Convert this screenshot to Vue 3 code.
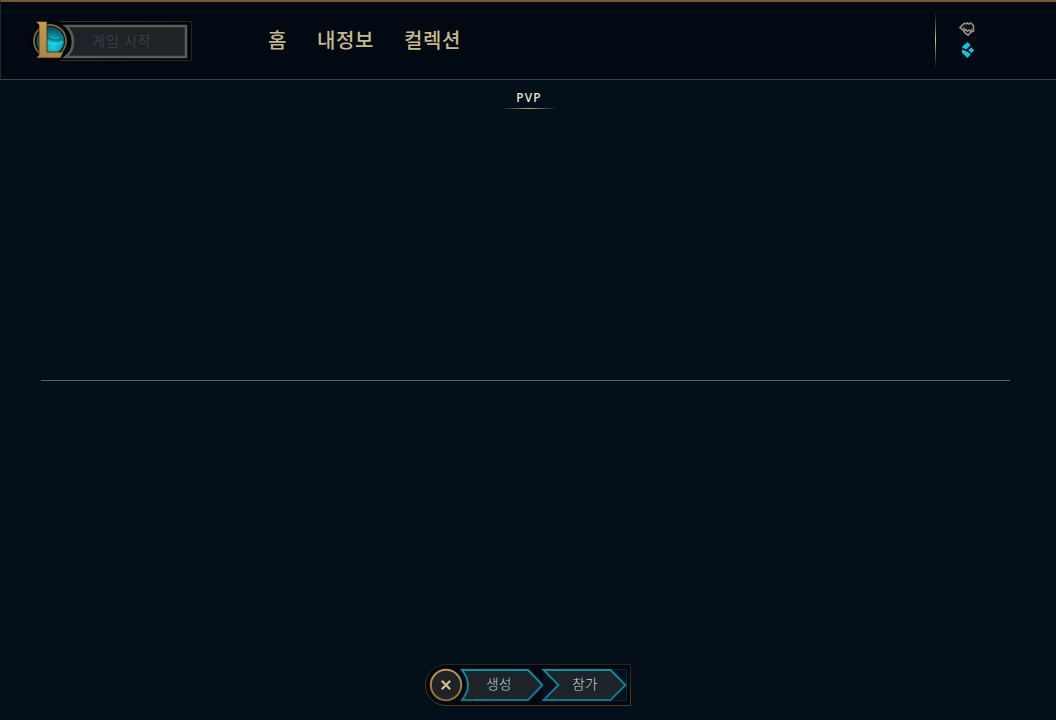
<script setup>
const navItems = [
  { id: 'home', label: '홈' },
  { id: 'profile', label: '내정보' },
  { id: 'collection', label: '컬렉션' },
]
</script>

<template>
  <div class="client">
    <header class="topbar">
      <button class="play" disabled>
        <svg class="art" width="162" height="42" viewBox="0 0 162 42">
          <defs>
            <linearGradient id="gold" x1="0" y1="0" x2="0" y2="1">
              <stop offset="0" stop-color="#c99a4c" />
              <stop offset="1" stop-color="#b08542" />
            </linearGradient>
            <radialGradient id="orb" cx=".6" cy=".72" r=".68">
              <stop offset="0" stop-color="#10d2df" />
              <stop offset=".5" stop-color="#0ba3b6" />
              <stop offset="1" stop-color="#075266" />
            </radialGradient>
            <linearGradient id="rim" x1="0" y1="0" x2="1" y2="0">
              <stop offset="0" stop-color="#43351e" />
              <stop offset="1" stop-color="#2b241a" />
            </linearGradient>
          </defs>
          <path d="M30 1.5H161.5V40.500H30" fill="#01060e" stroke="url(#rim)" />
          <path d="M35.500 6H156V37H35.500Q43 31 43 21.500T35.500 6Z" fill="#1e2328" stroke="#5c5b57" stroke-width="2.500" />
          <circle cx="20" cy="21" r="20.500" fill="#01060e" />
          <path d="M36 6Q43 12 43 21.500T36 37" fill="none" stroke="#5c5b57" stroke-width="2" />
          <circle cx="20" cy="21" r="16" fill="#020d16" stroke="#86652f" stroke-width="1.800" />
          <circle cx="20.500" cy="21" r="13.500" fill="url(#orb)" stroke="#0a6174" />
          <path d="M16 12Q25 10 31 18M16 17Q24 22 32 19" fill="none" stroke="#087386" stroke-width="1.500" />
          <path d="M16 21Q24 27 33 22" fill="none" stroke="#25e1e8" stroke-width="1.300" />
          <path d="M6 1.500H17V32H33.500L30.500 38H6L9 35V5Z" fill="url(#gold)" stroke="#231b12" stroke-width=".7" />
        </svg>
        <span class="play-label">게임 시작</span>
      </button>
      <nav class="nav">
        <a v-for="item in navItems" :key="item.id">{{ item.label }}</a>
      </nav>
      <div class="wallet">
        <i class="divider"></i>
        <div class="currencies">
          <svg width="16" height="16" viewBox="0 0 16 16">
            <path d="M1 6.500L5.500 2.200L7 3L8.500 2L10 3L11.500 2L13 3L14.500 4.500V10L12 11.200L9 14.200L6 12L4.500 9.500Z" fill="#121315" stroke="#9c9688" stroke-width="1.500" />
            <path d="M4.500 6.500L5.800 9.500L7.300 8.500L8.300 10.500L10 9L11.500 10.500L13 8" fill="none" stroke="#9c9688" stroke-width="1.300" />
          </svg>
          <svg width="16" height="18" viewBox="0 0 16 18">
            <path d="M8.500 1L11.500 4.200L7.600 8.200L3.300 7V5.500ZM3 8.500L8.500 10.800L11.800 13.200L8.500 17L3 11.700ZM12.300 6.500L15.200 9.200L12.300 11.900L9.300 9.200Z" fill="#0ac8e5" />
          </svg>
        </div>
      </div>
    </header>

    <main class="lobby">
      <div class="tab">PVP</div>
      <hr class="rule" />
    </main>

    <footer class="actions">
      <svg class="art" width="206" height="42" viewBox="0 0 206 42">
        <defs>
          <linearGradient id="frame" x1="0" y1="0" x2="0" y2="1">
            <stop offset="0" stop-color="#2c2519" />
            <stop offset="1" stop-color="#553b13" />
          </linearGradient>
          <linearGradient id="ring" x1="0" y1="0" x2="0" y2="1">
            <stop offset="0" stop-color="#c4994b" />
            <stop offset="1" stop-color="#8e672b" />
          </linearGradient>
          <linearGradient id="teal" x1="0" y1="0" x2="0" y2="1">
            <stop offset="0" stop-color="#0693a5" />
            <stop offset="1" stop-color="#087a90" />
          </linearGradient>
        </defs>
        <path d="M21 .5H205.500V41.500H21A20.500 20.500 0 0 1 21 .5Z" fill="#010810" stroke="url(#frame)" />
        <path d="M37 6H103L117.500 21L103 36H37Q49 21 37 6Z" fill="#1e2328" stroke="url(#teal)" stroke-width="2" />
        <path d="M186 5.500H201.500V36.500H186" fill="#03131e" stroke="#062936" />
        <path d="M118 6L134 21L118 36" fill="#0b1118" />
        <path d="M118.500 6H185.500L200.500 21L185.500 36H118.500L133.500 21Z" fill="#1e2328" stroke="url(#teal)" stroke-width="1.800" />
        <circle cx="21" cy="21" r="15.200" fill="#1e2328" stroke="url(#ring)" stroke-width="2" />
        <path d="M16.800 16.800L25.200 25.200M25.200 16.800L16.800 25.200" stroke="#cdbe91" stroke-width="2.300" />
      </svg>
      <button class="close" aria-label="닫기"></button>
      <button class="action">생성</button>
      <button class="action">참가</button>
    </footer>
  </div>
</template>

<style>
body { margin: 0; background: #010a13; }
</style>

<style scoped>
.client {
  box-sizing: border-box;
  width: 1056px;
  height: 720px;
  display: flex;
  flex-direction: column;
  background: #031019;
  font-family: "Noto Sans CJK KR", sans-serif;
  overflow: hidden;
}
button {
  padding: 0;
  border: 0;
  background: none;
  font-family: inherit;
}
.topbar {
  box-sizing: border-box;
  height: 80px;
  flex: none;
  display: flex;
  align-items: flex-start;
  border-top: 2px solid #785a28;
  border-left: 1px solid #1d282d;
  border-bottom: 1px solid #3a4546;
  background: #010a13;
}
.play {
  position: relative;
  width: 162px;
  height: 42px;
  margin: 18px 0 0 29px;
}
.art {
  position: absolute;
  left: 0;
  top: 0;
  display: block;
}
.play-label {
  position: relative;
  display: block;
  padding: 0 0 2px 62px;
  text-align: left;
  color: #3c3c41;
  font-size: 14px;
  line-height: 40px;
  letter-spacing: 1px;
  white-space: nowrap;
}
.nav {
  display: flex;
  gap: 30px;
  margin: 23px 0 0 76px;
  color: #c8b98c;
  font-size: 20px;
  font-weight: 500;
  line-height: 30px;
  letter-spacing: .6px;
}
.wallet {
  display: flex;
  align-items: flex-start;
  margin: 10px 81px 0 auto;
}
.divider {
  width: 1px;
  height: 56px;
  margin-right: 23px;
  background: linear-gradient(transparent, #786b4b 30%, #cdbe91 50%, #786b4b 70%, transparent);
}
.currencies {
  display: grid;
  gap: 4px;
  padding-top: 9px;
}
.currencies svg { display: block; }
.lobby {
  flex: 1;
  display: flex;
  flex-direction: column;
  align-items: center;
}
.tab {
  width: 54px;
  height: 28px;
  margin-left: 2px;
  border-bottom: 1px solid;
  border-image: linear-gradient(90deg, transparent, #b8a574 50%, transparent) 1;
  color: #f0e6d2;
  font: 500 12px/35px "Noto Sans", sans-serif;
  letter-spacing: 1.2px;
  text-align: center;
}
.rule {
  width: 969px;
  height: 1px;
  margin: 271px 5px 0 0;
  border: 0;
  background: #5b6460;
}
.actions {
  position: relative;
  width: 206px;
  height: 42px;
  flex: none;
  display: flex;
  align-items: center;
  margin: 0 auto 14px 425px;
}
.close {
  position: relative;
  width: 42px;
  height: 42px;
  border-radius: 50%;
}
.action {
  position: relative;
  width: 64px;
  height: 42px;
  padding-bottom: 4px;
  color: #b4dcdc;
  font-size: 13.5px;
  font-weight: 300;
  letter-spacing: .4px;
}
.action + .action { margin-left: 22px; }
</style>
